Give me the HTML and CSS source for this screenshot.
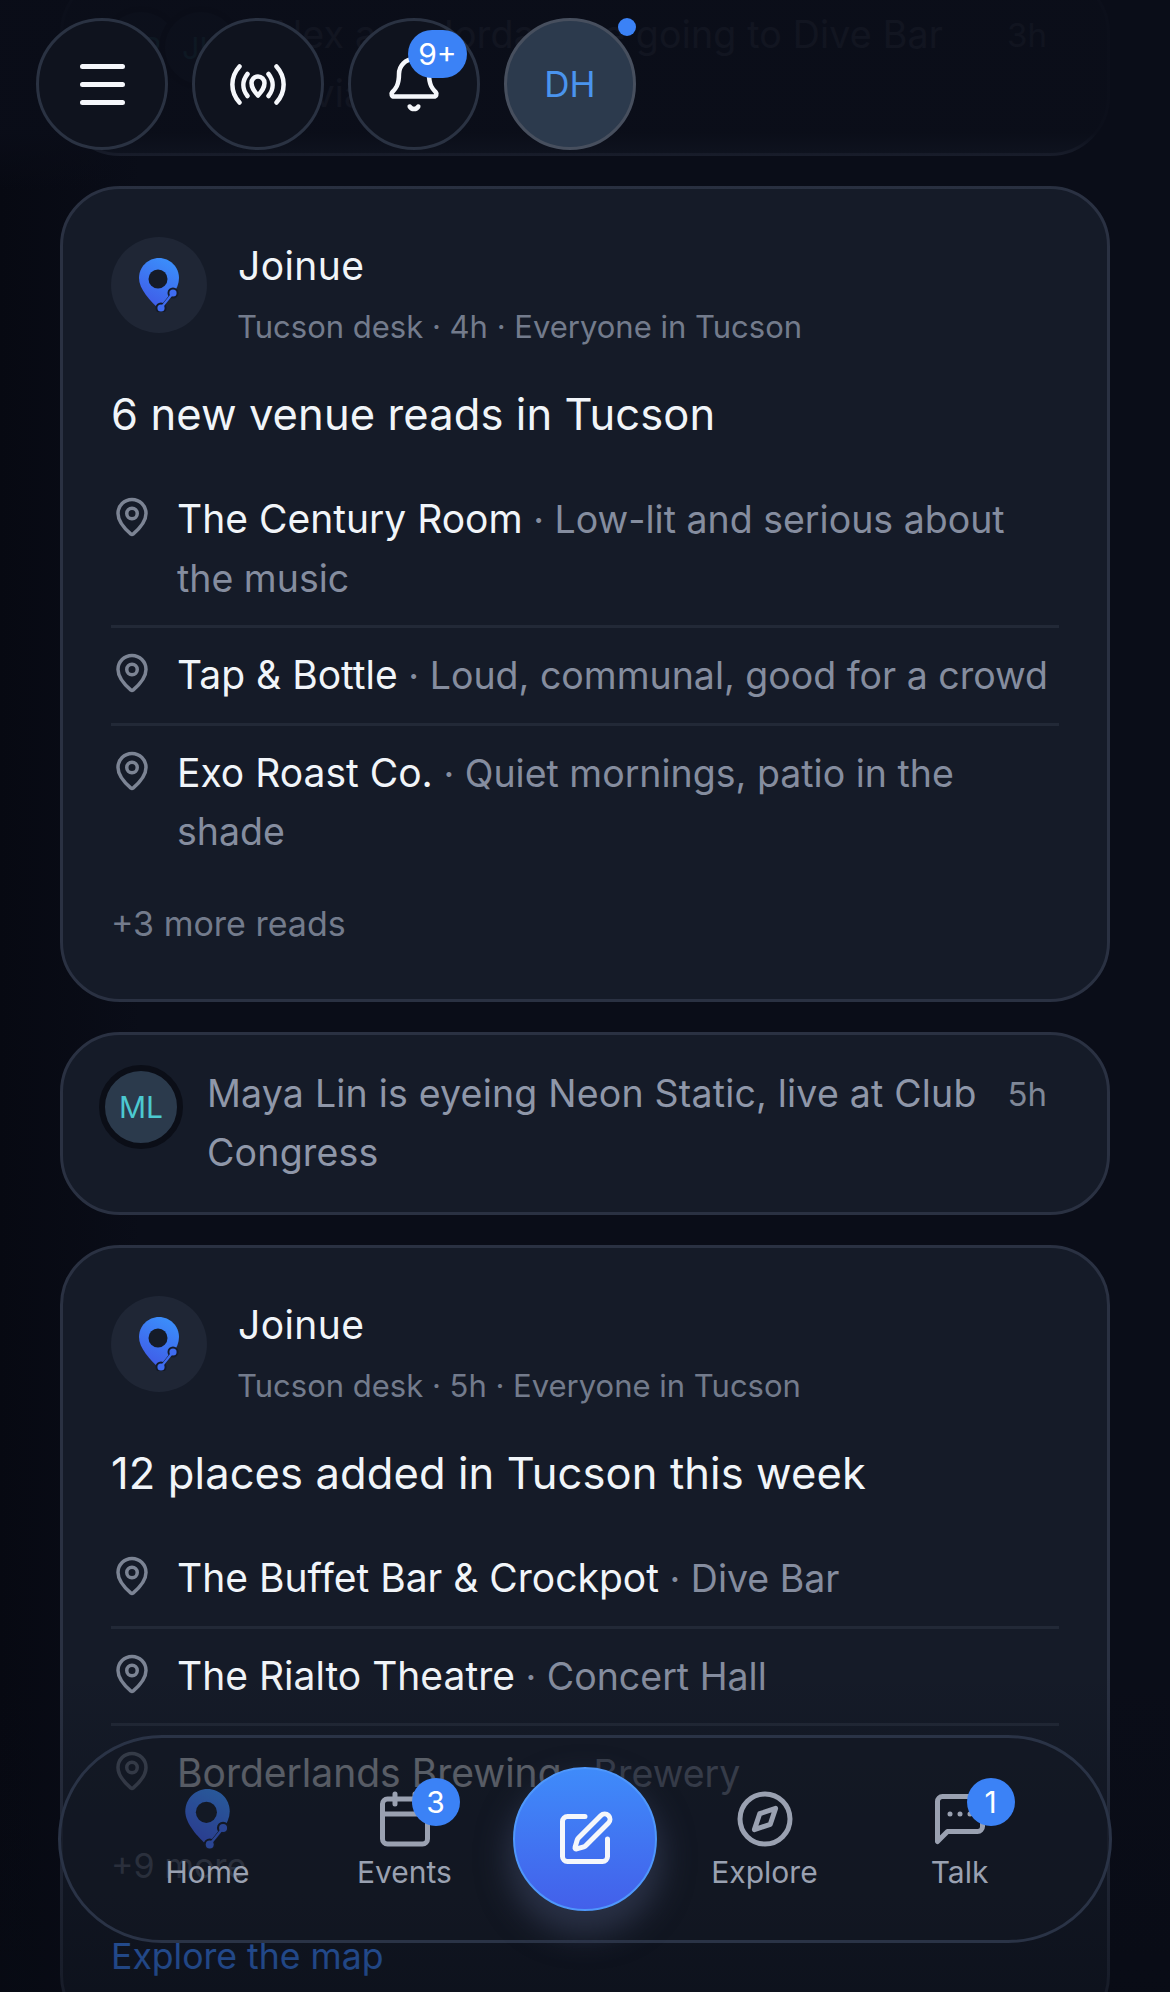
FILE: index.html
```html
<!DOCTYPE html>
<html lang="en">
<head>
    <meta charset="UTF-8">
    <meta name="viewport" content="width=device-width, initial-scale=1.0">
    <title>Joinue</title>
    <link rel="stylesheet" href="styles.css">
</head>
<body>

<svg class="defs" width="0" height="0">
    <defs>
        <linearGradient id="pinFill" x1="0.7" y1="0" x2="0.3" y2="1">
            <stop offset="0" stop-color="#3b8ffb"/>
            <stop offset="1" stop-color="#4058e6"/>
        </linearGradient>
        <symbol id="logo" viewBox="0 0 40 54">
            <path fill="url(#pinFill)" d="M20 0C31 0 40 9 40 20C40 31 30 43 21 52C11 43 0 31 0 20C0 9 9 0 20 0Z"/>
            <circle class="logo-hole" cx="19" cy="21" r="9.5"/>
            <path class="logo-cut" d="M34 35L22 50"/>
            <circle class="logo-cut" cx="34" cy="35" r="4"/>
            <circle class="logo-cut" cx="22" cy="50" r="4"/>
            <path d="M34 35L22 50" stroke="#3f6cf0" stroke-width="2.2"/>
            <circle cx="34" cy="35" r="3.6" fill="#3f6cf0"/>
            <circle cx="22" cy="50" r="3.6" fill="#3f6cf0"/>
        </symbol>
        <symbol id="pin" viewBox="0 0 24 24">
            <path d="M20 10c0 4.993-5.539 10.193-7.399 11.799a1 1 0 0 1-1.202 0C9.539 20.193 4 14.993 4 10a8 8 0 0 1 16 0"/>
            <circle cx="12" cy="10" r="3"/>
        </symbol>
    </defs>
</svg>

<main class="feed">
    <article class="card note">
        <div class="stack">
            <span class="avatar">AR</span>
            <span class="avatar">JK</span>
        </div>
        <p class="note-text">Alex and Jordan are going to Dive Bar Trivia</p>
        <span class="note-time">3h</span>
    </article>

    <article class="card post">
        <header class="post-head">
            <span class="logo-wrap"><svg class="logo"><use href="#logo"/></svg></span>
            <div>
                <div class="post-name">Joinue</div>
                <div class="post-meta">Tucson desk · 4h · Everyone in Tucson</div>
            </div>
        </header>
        <h2 class="post-title">6 new venue reads in Tucson</h2>
        <ul class="places">
            <li><svg class="pin"><use href="#pin"/></svg><span><b>The Century Room</b> · Low-lit and serious about the music</span></li>
            <li><svg class="pin"><use href="#pin"/></svg><span><b>Tap &amp; Bottle</b> · Loud, communal, good for a crowd</span></li>
            <li><svg class="pin"><use href="#pin"/></svg><span><b>Exo Roast Co.</b> · Quiet mornings, patio in the shade</span></li>
        </ul>
        <div class="more">+3 more reads</div>
    </article>

    <article class="card note">
        <div class="stack">
            <span class="avatar">ML</span>
        </div>
        <p class="note-text">Maya Lin is eyeing Neon Static, live at Club Congress</p>
        <span class="note-time">5h</span>
    </article>

    <article class="card post">
        <header class="post-head">
            <span class="logo-wrap"><svg class="logo"><use href="#logo"/></svg></span>
            <div>
                <div class="post-name">Joinue</div>
                <div class="post-meta">Tucson desk · 5h · Everyone in Tucson</div>
            </div>
        </header>
        <h2 class="post-title">12 places added in Tucson this week</h2>
        <ul class="places">
            <li><svg class="pin"><use href="#pin"/></svg><span><b>The Buffet Bar &amp; Crockpot</b> · Dive Bar</span></li>
            <li><svg class="pin"><use href="#pin"/></svg><span><b>The Rialto Theatre</b> · Concert Hall</span></li>
            <li><svg class="pin"><use href="#pin"/></svg><span><b>Borderlands Brewing</b> · Brewery</span></li>
        </ul>
        <div class="more">+9 more</div>
        <a class="map-link">Explore the map</a>
    </article>
</main>

<div class="fade-top"></div>
<div class="fade-bottom"></div>

<div class="topbar">
    <button class="round">
        <svg class="ico-menu" viewBox="0 0 45 41"><path d="M2.5 2.5H42.5M2.5 20.5H42.5M2.5 38.5H42.5"/></svg>
    </button>
    <button class="round">
        <svg class="ico-live" viewBox="0 0 56 41">
            <path d="M9.500 2.500C0 13 0 28 9.500 38.500M46.500 2.500C56 13 56 28 46.500 38.500"/>
            <path d="M17.500 10C12 17 12 25 17.500 32M38.500 10C44 17 44 25 38.500 32"/>
            <path d="M28 31.500C24 27 21.500 24 21.500 19a6.500 6.500 0 0 1 13 0C34.500 24 32 27 28 31.500Z"/>
        </svg>
    </button>
    <button class="round">
        <svg class="ico-bell" viewBox="0 0 24 24">
            <path d="M10.268 21a2 2 0 0 0 3.464 0"/>
            <path d="M3.262 15.326A1 1 0 0 0 4 17h16a1 1 0 0 0 .74-1.673C19.41 13.956 18 12.499 18 8A6 6 0 0 0 6 8c0 4.499-1.411 5.956-2.738 7.326"/>
        </svg>
        <span class="badge badge-wide">9+</span>
    </button>
    <button class="round me">DH<span class="me-dot"></span></button>
</div>

<nav class="tabs">
    <a class="tab">
        <span class="tab-ico"><svg class="logo logo-dim"><use href="#logo"/></svg></span>
        <span>Home</span>
    </a>
    <a class="tab">
        <span class="tab-ico">
            <svg viewBox="0 0 24 24"><path d="M8 2v4M16 2v4"/><rect x="3" y="4" width="18" height="18" rx="2"/><path d="M3 10h18"/></svg>
            <span class="badge">3</span>
        </span>
        <span>Events</span>
    </a>
    <button class="compose">
        <svg viewBox="0 0 24 24">
            <path d="M12 3H5a2 2 0 0 0-2 2v14a2 2 0 0 0 2 2h14a2 2 0 0 0 2-2v-7"/>
            <path d="M18.375 2.625a1 1 0 0 1 3 3l-9.013 9.014a2 2 0 0 1-.853.505l-2.873.84a.5.5 0 0 1-.62-.62l.84-2.873a2 2 0 0 1 .506-.852z"/>
        </svg>
    </button>
    <a class="tab">
        <span class="tab-ico">
            <svg viewBox="0 0 24 24"><circle cx="12" cy="12" r="10"/><path d="m16.240 7.760-2.120 6.360-6.360 2.120 2.120-6.360z"/></svg>
        </span>
        <span>Explore</span>
    </a>
    <a class="tab">
        <span class="tab-ico">
            <svg viewBox="0 0 24 24"><path d="M21 15a2 2 0 0 1-2 2H7l-4 4V5a2 2 0 0 1 2-2h14a2 2 0 0 1 2 2z"/><path d="M8 10h.01M12 10h.01M16 10h.01"/></svg>
            <span class="badge">1</span>
        </span>
        <span>Talk</span>
    </a>
</nav>

</body>
</html>
```

FILE: styles.css
```css
html, body {
    margin: 0;
    height: 1992px;
    overflow: hidden;
}
body {
    position: relative;
    background: linear-gradient(90deg, #070912, #0a0d18 12%);
    color: #f1f5f9;
    font-family: Inter, "Noto Sans", sans-serif;
    font-size: 37.5px;
    line-height: 58.5px;
}
.defs {
    position: absolute;
}
.feed {
    display: flex;
    flex-direction: column;
    gap: 30px;
    margin-top: -27px;
    padding: 0 60px;
}
.card {
    background: #151b28;
    border: 3px solid #2a3142;
    border-radius: 60px;
}

/* activity notes */
.note {
    display: flex;
    align-items: flex-start;
    padding: 30px 36px;
}
.stack {
    display: flex;
    flex-shrink: 0;
    margin-right: 24px;
}
.avatar {
    display: flex;
    align-items: center;
    justify-content: center;
    width: 72px;
    height: 72px;
    border: 6px solid #0b0e17;
    border-radius: 50%;
    background: #2b3a4c;
    color: #4cc9d0;
    font-size: 30px;
}
.avatar + .avatar {
    margin-left: -24px;
}
.note-text {
    flex: 1;
    margin: 0;
    color: #8f97a9;
    letter-spacing: 0.2px;
}
.note-time {
    margin-left: 24px;
    margin-right: 24px;
    color: #7f8797;
    font-size: 33px;
}

/* desk posts */
.post {
    padding: 48px 48px 50px;
}
.post-head {
    display: flex;
    gap: 30px;
}
.logo-wrap {
    display: flex;
    align-items: center;
    justify-content: center;
    width: 96px;
    height: 96px;
    border-radius: 50%;
    background: #1f2635;
}
.logo {
    width: 40px;
    height: 54px;
}
.logo-hole {
    fill: #151b28;
}
.logo-cut {
    fill: #151b28;
    stroke: #151b28;
    stroke-width: 3;
}
.post-name {
    padding-left: 1px;
    font-size: 39px;
    letter-spacing: 0.4px;
}
.post-meta {
    margin-top: 6px;
    color: #737b8c;
    font-size: 31px;
    line-height: 49.5px;
}
.post-title {
    margin: 32px 0 0;
    font-size: 43.5px;
    line-height: 63px;
    font-weight: 400;
    letter-spacing: 0.1px;
}
.places {
    margin: 26px 0 0;
    padding: 0;
    list-style: none;
    color: #858d9f;
}
.places li {
    display: flex;
    gap: 24px;
    padding: 18px 0 17px;
    border-bottom: 3px solid #222937;
}
.places li:last-child {
    border-bottom: none;
}
.places b {
    color: #f1f5f9;
    font-size: 39px;
    font-weight: 400;
}
.pin {
    flex-shrink: 0;
    width: 42px;
    height: 42px;
    margin-top: 6px;
    fill: none;
    stroke: #7c8494;
    stroke-width: 2;
}
.more {
    margin-top: 19.5px;
    color: #737b8c;
    font-size: 34px;
    line-height: 51px;
}
.map-link {
    display: block;
    margin-top: 40px;
    color: #3b82f6;
    font-size: 35.6px;
    line-height: 51px;
}

/* fades over the scrolled feed */
.fade-top {
    position: absolute;
    top: 0;
    left: 0;
    right: 0;
    height: 190px;
    background: linear-gradient(rgba(10, 13, 24, 0.94) 70%, rgba(10, 13, 24, 0));
}
.fade-bottom {
    position: absolute;
    left: 0;
    right: 0;
    bottom: 0;
    height: 320px;
    background: linear-gradient(rgba(8, 11, 20, 0), rgba(8, 11, 20, 0.55));
}

/* top controls */
.topbar {
    position: absolute;
    top: 18px;
    left: 36px;
    display: flex;
    gap: 24px;
}
.round {
    position: relative;
    display: flex;
    align-items: center;
    justify-content: center;
    box-sizing: border-box;
    width: 132px;
    height: 132px;
    padding: 0;
    border: 3px solid #2a3242;
    border-radius: 50%;
    background: #0f131e;
    font-family: inherit;
}
.round svg {
    fill: none;
    stroke: #f5f7fb;
    stroke-linecap: round;
    stroke-linejoin: round;
}
.ico-menu {
    width: 45px;
    height: 41px;
    stroke-width: 5;
}
.ico-live {
    width: 56px;
    height: 41px;
    stroke-width: 4.5;
}
.ico-bell {
    width: 60px;
    height: 60px;
    stroke-width: 1.8;
}
.badge {
    position: absolute;
    top: -11px;
    left: 37px;
    display: flex;
    align-items: center;
    justify-content: center;
    min-width: 48px;
    height: 48px;
    border-radius: 24px;
    background: #3b82f6;
    color: #fff;
    font-size: 30px;
    font-weight: 400;
}
.badge-wide {
    top: 9px;
    left: 57px;
    min-width: 59px;
}
.me {
    border-color: #474f5e;
    background: #2c3a4d;
    color: #4a94ee;
    font-size: 35px;
}
.me-dot {
    position: absolute;
    top: -3px;
    left: 111px;
    width: 18px;
    height: 18px;
    border-radius: 50%;
    background: #3b82f6;
}

/* bottom tabs */
.tabs {
    position: absolute;
    left: 58px;
    right: 58px;
    bottom: 49px;
    box-sizing: border-box;
    display: grid;
    grid-template-columns: 197px 197px 163px 197px 193px;
    align-items: center;
    height: 208px;
    padding: 0 48px;
    border: 3px solid #2a3346;
    border-radius: 104px;
    background: rgba(19, 24, 36, 0.62);
}
.tab {
    display: flex;
    flex-direction: column;
    align-items: center;
    gap: 5px;
    color: #9aa1b1;
    font-size: 30px;
    line-height: 36px;
}
.tab-ico {
    position: relative;
    display: flex;
    align-items: center;
    justify-content: center;
    width: 60px;
    height: 60px;
}
.tab-ico > svg {
    width: 60px;
    height: 60px;
    fill: none;
    stroke: #9aa1b1;
    stroke-width: 2;
    stroke-linecap: round;
    stroke-linejoin: round;
}
.tab-ico > .logo-dim {
    width: 45px;
    height: 60px;
    stroke: none;
    opacity: 0.55;
}
.compose {
    justify-self: center;
    display: flex;
    align-items: center;
    justify-content: center;
    box-sizing: border-box;
    width: 144px;
    height: 144px;
    padding: 0;
    border: 2px solid #4f97fb;
    border-radius: 50%;
    background: linear-gradient(#3f8bfa, #4360ea);
    box-shadow: 0 18px 30px 6px rgba(50, 58, 82, 0.75);
}
.compose svg {
    width: 60px;
    height: 60px;
    fill: none;
    stroke: #f5f7fb;
    stroke-width: 2;
    stroke-linecap: round;
    stroke-linejoin: round;
}
```
